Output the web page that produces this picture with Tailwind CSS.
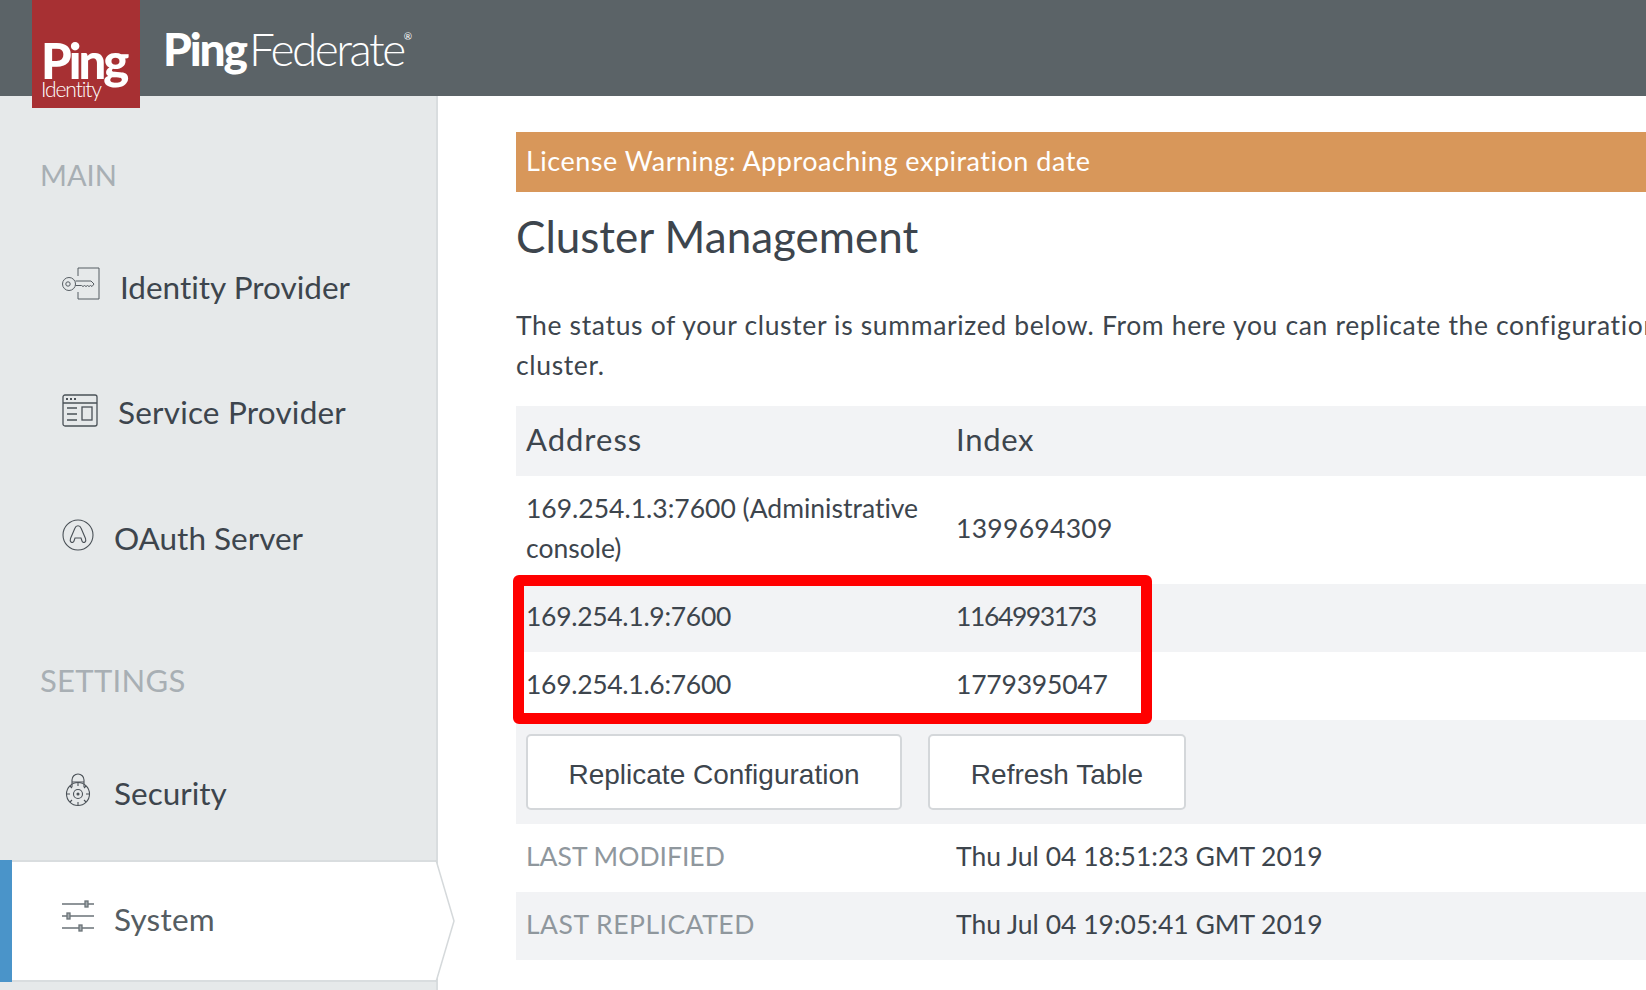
<!DOCTYPE html>
<html lang="en">
  <head>
    <meta charset="UTF-8" />
    <meta name="viewport" content="width=device-width, initial-scale=1.0" />
    <title>PingFederate</title>
    <script src="https://cdn.jsdelivr.net/npm/@tailwindcss/browser@4"></script>
  </head>
  <body class="h-[990px] w-[1646px] overflow-hidden bg-white font-['Lato',sans-serif] text-[#3d454d] [font-variant-ligatures:none]">
    <!-- header -->
    <header class="relative z-10 flex h-24 items-start bg-[#5b6367] pl-8">
      <div class="flex h-[108px] w-[108px] shrink-0 flex-col bg-[#a73033] pl-[9px] pt-[38px] text-white">
        <span class="text-[49px] leading-[44px] font-black tracking-[-3px]">Ping</span>
        <span class="-mt-[4px] text-[21px] leading-[22px] font-light tracking-[-1.1px]">Identity</span>
      </div>
      <div class="ml-[23px] flex items-start pt-[21px] text-white">
        <span class="text-[46px] leading-[56px] font-black tracking-[-2.1px]">Ping</span>
        <span class="ml-[3px] text-[46px] leading-[56px] font-light tracking-[-2.5px]">Federate</span>
        <span class="mt-[8px] text-[10px] leading-[14px]">®</span>
      </div>
    </header>

    <div class="flex h-[894px]">
      <!-- sidebar -->
      <aside class="relative w-[438px] shrink-0 border-r-2 border-[#d9dddf] bg-[#e6e9ea]">
        <h2 class="pt-[61px] pl-10 text-[29px] leading-9 text-[#a8afb4]">MAIN</h2>
        <nav class="mt-[29px] flex flex-col text-[31.500px] leading-10">
          <a class="flex h-[126px] items-start gap-[18px] pt-[45px] pl-[62px]">
            <svg class="h-9 w-10" viewBox="0 0 40 36" fill="none" stroke="#555c62" stroke-width="1">
              <path d="M16 9V1h21v31H16v-7" />
              <circle cx="7" cy="17" r="6.500" />
              <circle cx="6" cy="17" r="2.200" />
              <path d="M13.500 14H29l3 3-2 2.500-1.500-1-1.500 1-1.500-1-1.500 1-1.500-1-1.500 1-1.500-1H13.500" />
            </svg>
            <span>Identity Provider</span>
          </a>
          <a class="flex h-[126px] items-start gap-5 pt-[44px] pl-[62px] tracking-[.2px]">
            <svg class="mt-[1px] h-9 w-[36px]" viewBox="0 0 36 34" fill="none" stroke="#4a5157" stroke-width="1.3">
              <rect x="1" y="1" width="34" height="31" rx="2" />
              <path d="M1 9h34M5 14h10M5 20h10M5 26h10" />
              <rect x="20" y="13" width="10" height="13" />
              <path d="M4 5h2M8 5h2M12 5h2" stroke-width="2" />
            </svg>
            <span>Service Provider</span>
          </a>
          <a class="flex h-[126px] items-start gap-5 pt-[44px] pl-[62px]">
            <svg class="mt-[1px] h-8 w-8" viewBox="0 0 32 32" fill="none" stroke="#4a5157" stroke-width="1.1">
              <circle cx="16" cy="16" r="15" />
              <path d="M9 23c-1-1-1-2-.5-3.500L13 9c1-3 5-3 6 0l4.500 10.500c.5 1.500.5 2.500-.5 3.500-1 .8-2.500.5-3-1l-1-3h-6l-1 3c-.5 1.500-2 1.800-3 1z" />
            </svg>
            <span>OAuth Server</span>
          </a>
        </nav>
        <h2 class="mt-[62px] pl-10 text-[31px] leading-9 tracking-[.3px] text-[#a8afb4]">SETTINGS</h2>
        <nav class="mt-[38px] flex flex-col text-[31.500px] leading-10">
          <a class="flex h-[124px] items-start gap-[23px] pt-[37px] pl-[65px]">
            <svg class="h-[34px] w-[26px]" viewBox="0 0 26 34" fill="none" stroke="#4a5157" stroke-width="1.1">
              <path d="M7 14V7a6 6 0 0 1 12 0v7M7 9h12" />
              <circle cx="13" cy="21" r="11.500" />
              <circle cx="13" cy="21" r="4.500" />
              <circle cx="13" cy="21" r="1" fill="#4a5157" />
              <path d="M13 10v3M13 29v3M2 21h3M21 21h3M5 13l2 2M21 13l-2 2M5 29l2-2M21 29l-2-2" />
            </svg>
            <span>Security</span>
          </a>
          <a class="relative flex h-[122px] items-start gap-5 border-y-2 border-[#d9dddf] bg-white pt-[37px] pl-[62px] tracking-[.2px] text-[#555d62]">
            <span class="absolute top-[-2px] bottom-[-2px] left-0 w-3 bg-[#4a94c9]"></span>
            <svg class="mt-[1px] h-[32px] w-8" viewBox="0 0 32 32" fill="none" stroke="#6b7378" stroke-width="1.3">
              <path d="M0 4h32M0 16h32M0 28h32" />
              <rect x="23" y="1" width="3" height="6" fill="#a5abaf" />
              <rect x="5" y="13" width="3" height="6" fill="#a5abaf" />
              <rect x="17" y="25" width="3" height="6" fill="#a5abaf" />
            </svg>
            <span>System</span>
            <svg class="absolute top-[-2px] left-[434px] h-[122px] w-[22px]" viewBox="0 0 22 122" fill="#fff" stroke="#d5d9db" stroke-width="1.5">
              <path d="M2 0l18 61L2 122" />
            </svg>
          </a>
        </nav>
      </aside>

      <!-- main -->
      <main class="relative min-w-0 flex-1 overflow-hidden pt-9 pl-[78px] text-[26.500px]">
        <div class="flex h-[60px] w-[1200px] items-center bg-[#d8975a] pb-[2px] pl-[10px] text-[27px] tracking-[.5px] text-white">License Warning: Approaching expiration date</div>
        <h1 class="mt-[18px] text-[44px] leading-[52px]">Cluster Management</h1>
        <p class="mt-[43px] whitespace-nowrap leading-10 tracking-[.65px]">
          The status of your cluster is summarized below. From here you can replicate the configuration<br />cluster.
        </p>
        <div class="mt-[21px] w-[1200px] leading-10">
          <div class="flex h-[70px] items-center bg-[#f2f3f5] pb-1 pl-[10px] text-[31px]">
            <span class="w-[430px] tracking-[1px]">Address</span>
            <span class="tracking-[.7px]">Index</span>
          </div>
          <div class="flex h-[108px] items-center pb-1 pl-[10px]">
            <span class="w-[430px] pr-6">169.254.1.3:7600 (Administrative console)</span>
            <span class="tracking-[.3px]">1399694309</span>
          </div>
          <div class="flex h-[68px] items-center bg-[#f2f3f5] pb-1 pl-[10px]">
            <span class="w-[430px] tracking-[-.3px]">169.254.1.9:7600</span>
            <span class="tracking-[-1.4px]">1164993173</span>
          </div>
          <div class="flex h-[68px] items-center pb-1 pl-[10px]">
            <span class="w-[430px] tracking-[-.3px]">169.254.1.6:7600</span>
            <span class="tracking-[-.2px]">1779395047</span>
          </div>
          <div class="flex h-[104px] items-center gap-[26px] bg-[#f2f3f5] pl-[10px] font-['Liberation_Sans',sans-serif] text-[28px]">
            <button class="h-[76px] w-[376px] rounded-[5px] border-2 border-[#d4d7da] bg-white pt-[5px]">Replicate Configuration</button>
            <button class="h-[76px] w-[258px] rounded-[5px] border-2 border-[#d4d7da] bg-white pt-[5px]">Refresh Table</button>
          </div>
          <div class="flex h-[68px] items-center pb-1 pl-[10px]">
            <span class="w-[430px] text-[#8f979d]">LAST MODIFIED</span>
            <span>Thu Jul 04 18:51:23 GMT 2019</span>
          </div>
          <div class="flex h-[68px] items-center bg-[#f2f3f5] pb-1 pl-[10px]">
            <span class="w-[430px] tracking-[.5px] text-[#8f979d]">LAST REPLICATED</span>
            <span>Thu Jul 04 19:05:41 GMT 2019</span>
          </div>
        </div>
        <!-- red annotation box from the screenshot -->
        <div class="absolute top-[479px] left-[75px] h-[149px] w-[639px] rounded-[6px] border-[11px] border-[#ff0000]"></div>
      </main>
    </div>
  </body>
</html>
